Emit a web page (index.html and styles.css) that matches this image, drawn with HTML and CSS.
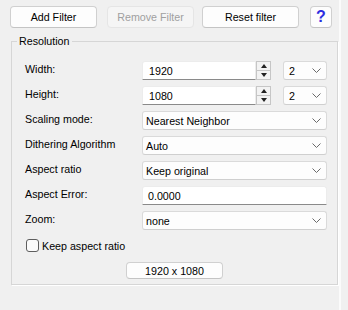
FILE: index.html
```html
<!DOCTYPE html>
<html lang="en">
<head>
  <meta charset="UTF-8" />
  <title>Filter</title>
  <link rel="stylesheet" href="styles.css">
</head>
<body>

  <div class="panel">
    <div class="toolbar">
      <button class="btn btn-add">Add Filter</button>
      <button class="btn btn-remove" disabled>Remove Filter</button>
      <button class="btn btn-reset">Reset filter</button>
      <button class="btn btn-help">?</button>
    </div>

    <fieldset class="group">
      <legend>Resolution</legend>

      <div class="form">
        <label>Width:</label>
        <div class="size-field">
          <div class="spin">
            <div class="spin-input">1920</div>
            <div class="spin-btns">
              <span class="arrow-up"></span>
              <span class="arrow-down"></span>
            </div>
          </div>
          <div class="combo combo-small">
            <span>2</span>
            <svg width="9" height="5" viewBox="0 0 9 5"><path d="M.5.5l4 4 4-4" fill="none" stroke="#6a6a6a"/></svg>
          </div>
        </div>

        <label>Height:</label>
        <div class="size-field">
          <div class="spin">
            <div class="spin-input">1080</div>
            <div class="spin-btns">
              <span class="arrow-up"></span>
              <span class="arrow-down"></span>
            </div>
          </div>
          <div class="combo combo-small">
            <span>2</span>
            <svg width="9" height="5" viewBox="0 0 9 5"><path d="M.5.5l4 4 4-4" fill="none" stroke="#6a6a6a"/></svg>
          </div>
        </div>

        <label>Scaling mode:</label>
        <div class="combo">
          <span>Nearest Neighbor</span>
          <svg width="9" height="5" viewBox="0 0 9 5"><path d="M.5.5l4 4 4-4" fill="none" stroke="#6a6a6a"/></svg>
        </div>

        <label>Dithering Algorithm</label>
        <div class="combo">
          <span>Auto</span>
          <svg width="9" height="5" viewBox="0 0 9 5"><path d="M.5.5l4 4 4-4" fill="none" stroke="#6a6a6a"/></svg>
        </div>

        <label>Aspect ratio</label>
        <div class="combo">
          <span>Keep original</span>
          <svg width="9" height="5" viewBox="0 0 9 5"><path d="M.5.5l4 4 4-4" fill="none" stroke="#6a6a6a"/></svg>
        </div>

        <label>Aspect Error:</label>
        <div class="text-input">0.0000</div>

        <label>Zoom:</label>
        <div class="combo">
          <span>none</span>
          <svg width="9" height="5" viewBox="0 0 9 5"><path d="M.5.5l4 4 4-4" fill="none" stroke="#6a6a6a"/></svg>
        </div>
      </div>

      <div class="check">
        <span class="check-box"></span>
        <span>Keep aspect ratio</span>
      </div>

      <div class="result-row">
        <button class="btn btn-result">1920 x 1080</button>
      </div>
    </fieldset>
  </div>

  <div class="splitter"></div>

</body>
</html>
```

FILE: styles.css
```css
* {
  box-sizing: border-box;
}

body {
  margin: 0;
  width: 348px;
  height: 310px;
  overflow: hidden;
  display: flex;
  background: #f0f0f0;
  color: #000;
  font-family: 'Liberation Sans', Arial, sans-serif;
  font-size: 10.7px;
}

.panel {
  width: 339px;
  padding: 6px 0 0 10px;
}

.splitter {
  width: 2px;
  background: #fbfbfb;
}

/* top buttons */

.toolbar {
  display: flex;
  height: 22px;
}

.btn {
  font-family: inherit;
  font-size: inherit;
  color: #000;
  background: #fdfdfd;
  border: 1px solid #d0d0d0;
  border-bottom-color: #c4c4c4;
  border-radius: 4px;
  padding: 0;
  height: 22px;
}

.btn-add {
  width: 87px;
}

.btn-remove {
  width: 87px;
  margin-left: 10px;
  color: #a0a0a0;
  background: #f5f5f5;
  border-color: #e5e5e5;
}

.btn-reset {
  width: 97px;
  margin-left: 8px;
}

.btn-help {
  width: 22px;
  margin-left: 11px;
  color: #2d2de0;
  font-weight: bold;
  font-size: 16px;
}

/* group box */

.group {
  width: 327px;
  margin: 7px 0 0 1px;
  padding: 0 9px 5px 13px;
  border: 1px solid #d6d6d6;
  box-shadow: 1px 1px 0 #fff;
}

.group legend {
  margin-left: -8px;
  padding: 0 2px;
  line-height: 13px;
}

.form {
  display: grid;
  grid-template-columns: 117px 185px;
  grid-auto-rows: 19px;
  row-gap: 6px;
  margin-top: 13px;
  align-items: center;
}

.form label {
  padding-bottom: 4px;
}

.size-field {
  display: flex;
  justify-content: space-between;
  height: 19px;
}

.spin {
  display: flex;
  width: 129px;
}

.spin-input,
.text-input {
  flex: 1;
  height: 19px;
  line-height: 18px;
  padding-left: 6px;
  background: #fff;
  border: 1px solid #ececec;
  border-bottom-color: #8a8a8a;
  border-radius: 3px 0 0 0;
}

.text-input {
  padding-left: 5px;
  border-radius: 3px 3px 0 0;
}

.spin-btns {
  width: 15px;
  display: flex;
  flex-direction: column;
  border: 1px solid #c6c6c6;
  background: #f3f3f3;
}

.spin-btns span {
  flex: 1;
  display: flex;
  align-items: center;
  justify-content: center;
}

.spin-btns span + span {
  border-top: 1px solid #c6c6c6;
}

.arrow-up::before {
  content: "";
  border-left: 3px solid transparent;
  border-right: 3px solid transparent;
  border-bottom: 4px solid #222;
}

.arrow-down::before {
  content: "";
  border-left: 3px solid transparent;
  border-right: 3px solid transparent;
  border-top: 4px solid #222;
}

.combo {
  display: flex;
  align-items: center;
  justify-content: space-between;
  height: 19px;
  padding: 0 5px 0 3px;
  background: #fdfdfd;
  border: 1px solid #dadada;
  border-bottom-color: #cfcfcf;
  border-radius: 3px;
}

.combo-small {
  width: 44px;
  padding-left: 5px;
}

/* checkbox and result */

.check {
  display: flex;
  align-items: center;
  margin: 9px 0 0 1px;
  height: 13px;
}

.check-box {
  width: 13px;
  height: 13px;
  margin-right: 3px;
  background: #fbfbfb;
  border: 1px solid #5e5e5e;
  border-radius: 3px;
}

.result-row {
  display: flex;
  justify-content: center;
  margin: 10px -9px 0 -13px;
}

.btn-result {
  width: 97px;
  height: 17px;
}
```
